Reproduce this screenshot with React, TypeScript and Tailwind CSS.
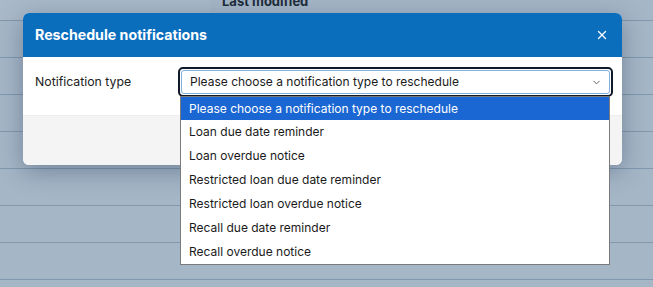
import React from "react"
import { X, ChevronDown } from "lucide-react"

const options = [
  "Please choose a notification type to reschedule",
  "Loan due date reminder",
  "Loan overdue notice",
  "Restricted loan due date reminder",
  "Restricted loan overdue notice",
  "Recall due date reminder",
  "Recall overdue notice",
]

export default function App() {
  return (
    <div
      className="relative w-[653px] h-[287px] overflow-hidden bg-[#a5b6c7]"
      style={{ fontFamily: "Inter, 'Noto Sans', sans-serif" }}
    >
      {/* table behind the overlay */}
      <div className="-mt-[7px] flex flex-col">
        <div className="h-[28px] border-b border-[#8198ae] flex">
          <div className="w-[210px] bg-[#a9b9c9]" />
          <div className="pl-[12px] text-[13px] font-bold text-[#1e2c3a] leading-[16px]">Last modified</div>
        </div>
        {Array.from({ length: 7 }).map((_, i) => (
          <div key={i} className="h-[37px] border-b border-[#8198ae]" />
        ))}
      </div>

      {/* modal */}
      <div className="absolute left-[23px] top-[13px] w-[599px] rounded-[6px] bg-white shadow-[0_6px_24px_rgba(20,40,70,0.35)]">
        <div className="h-[44px] rounded-t-[6px] bg-[#0b6ebd] flex items-center justify-between pl-[12px] pr-[13px]">
          <h2 className="text-[14.2px] font-bold text-white">Reschedule notifications</h2>
          <X className="w-[14px] h-[14px] text-white" strokeWidth={2.2} />
        </div>
        <div className="h-[58px] flex items-start pt-[10px] pl-[12px] pr-[9px]">
          <label className="w-[143px] pt-[7px] text-[12.3px] leading-[16px] text-[#222]">Notification type</label>
          <div className="relative flex-1">
            <div className="rounded-[5px] border-[2px] border-[#111827] p-[1px]">
              <div className="h-[24px] rounded-[3px] border border-[#7fb0dd] bg-white flex items-center justify-between pl-[8px] pr-[7px]">
                <span className="text-[12px] text-[#1a1a1a]">Please choose a notification type to reschedule</span>
                <ChevronDown className="w-[11px] h-[11px] text-[#555]" strokeWidth={2} />
              </div>
            </div>
            {/* open native list */}
            <div className="absolute left-[2px] right-[3px] top-[29px] z-10 border border-[#7a7a7a] bg-white flex flex-col">
              {options.map((o, i) => (
                <div
                  key={o}
                  className={
                    i === 0
                      ? "h-[23px] flex items-center pl-[8px] text-[12px] bg-[#1a66d2] text-white"
                      : "h-[24px] flex items-center pl-[8px] text-[12px] text-[#1a1a1a]"
                  }
                >
                  {o}
                </div>
              ))}
            </div>
          </div>
        </div>
        <div className="h-[50px] rounded-b-[6px] bg-[#f4f4f5] border-t border-[#eee]" />
      </div>
    </div>
  )
}
